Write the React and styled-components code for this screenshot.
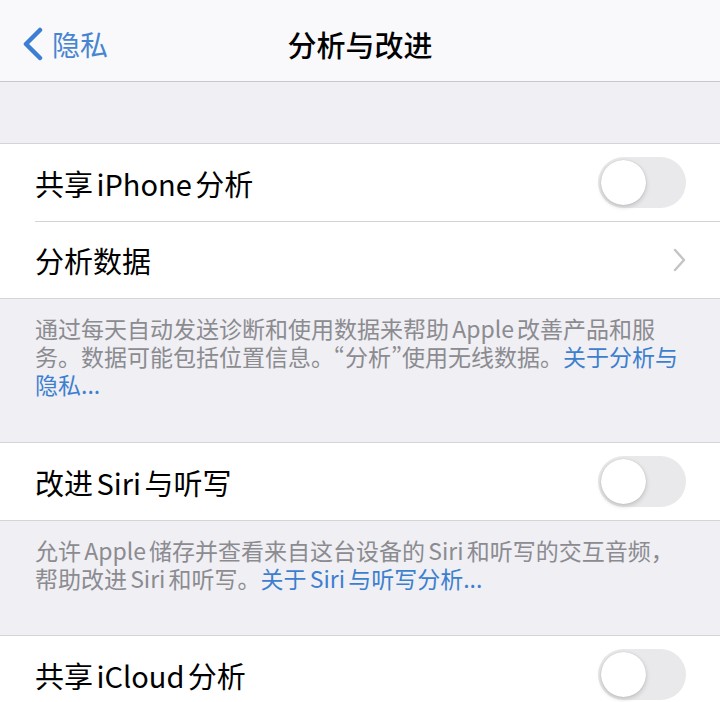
import React from 'react'
import styled, { createGlobalStyle } from 'styled-components'

const GlobalStyle = createGlobalStyle`
  body {
    margin: 0;
    background: #efeff4;
    font-family: 'Noto Sans CJK SC', 'Noto Sans', sans-serif;
    -webkit-font-smoothing: antialiased;
  }
`

const Screen = styled.div`
  width: 720px;
  min-height: 702px;
  overflow: hidden;
  background: #efeff4;
`

const NavBar = styled.div`
  height: 82px;
  box-sizing: border-box;
  padding-top: 6px;
  background: #f9f9fb;
  border-bottom: 1px solid #c8c8cc;
  display: grid;
  grid-template-columns: 1fr auto 1fr;
  align-items: center;
`

const BackButton = styled.div`
  display: flex;
  align-items: center;
  gap: 8px;
  padding-left: 22px;
  color: #4785d2;
  font-size: 28px;
`

const Title = styled.div`
  font-size: 29px;
  font-weight: 500;
  color: #000;
`

const Spacer = styled.div`
  height: 61px;
`

const Group = styled.div`
  background: #fff;
  border-top: 1px solid #d3d3d8;
  border-bottom: 1px solid #d3d3d8;
`

const Row = styled.div`
  height: 77px;
  padding-left: 35px;
  display: flex;
  align-items: center;
  & + & > div {
    border-top: 1px solid #d3d3d8;
  }
`

const RowInner = styled.div`
  flex: 1;
  height: 100%;
  display: flex;
  align-items: center;
  justify-content: space-between;
  padding-right: 34px;
  box-sizing: border-box;
`

const Label = styled.span`
  font-size: 29px;
  word-spacing: -3px;
  color: #000;
`

const Track = styled.div`
  width: 88px;
  height: 51px;
  border-radius: 26px;
  background: ${(p) => (p.on ? '#4cd964' : '#e9e9eb')};
  padding: 3px;
  box-sizing: border-box;
  display: flex;
  justify-content: ${(p) => (p.on ? 'flex-end' : 'flex-start')};
`

const Knob = styled.div`
  width: 45px;
  height: 45px;
  border-radius: 50%;
  background: #fff;
  box-shadow: 0 2px 5px rgba(0, 0, 0, 0.18), 0 0 1px rgba(0, 0, 0, 0.2);
`

const Footer = styled.div`
  padding: 15px 35px ${(p) => p.bottom}px;
  font-size: 23px;
  line-height: 28px;
  word-spacing: -2px;
  color: #8b8b90;
  white-space: nowrap;
`

const Quote = styled.span`
  font-feature-settings: 'pwid';
`

const Link = styled.span`
  color: #3d7fcf;
`

const Toggle = ({ on }) => (
  <Track on={on}>
    <Knob />
  </Track>
)

const BackChevron = () => (
  <svg width='22' height='34' viewBox='0 0 22 34'>
    <polyline
      points='18,3 4,17 18,31'
      fill='none'
      stroke='#3b7ed4'
      strokeWidth='4.5'
      strokeLinecap='round'
      strokeLinejoin='round'
    />
  </svg>
)

const Disclosure = () => (
  <svg width='14' height='24' viewBox='0 0 14 24'>
    <polyline
      points='3,2 12,12 3,22'
      fill='none'
      stroke='#c4c4c8'
      strokeWidth='2.4'
      strokeLinecap='round'
      strokeLinejoin='round'
    />
  </svg>
)

const App = () => {
  return (
    <Screen>
      <GlobalStyle />
      <NavBar>
        <BackButton>
          <BackChevron />
          隐私
        </BackButton>
        <Title>分析与改进</Title>
        <div />
      </NavBar>
      <Spacer />
      <Group>
        <Row>
          <RowInner>
            <Label>共享 iPhone 分析</Label>
            <Toggle />
          </RowInner>
        </Row>
        <Row>
          <RowInner>
            <Label>分析数据</Label>
            <Disclosure />
          </RowInner>
        </Row>
      </Group>
      <Footer bottom={44}>
        通过每天自动发送诊断和使用数据来帮助 Apple 改善产品和服
        <br />
        务。数据可能包括位置信息。<Quote>“</Quote>分析<Quote>”</Quote>
        使用无线数据。<Link>关于分析与</Link>
        <br />
        <Link>隐私...</Link>
      </Footer>
      <Group>
        <Row>
          <RowInner>
            <Label>改进 Siri 与听写</Label>
            <Toggle />
          </RowInner>
        </Row>
      </Group>
      <Footer bottom={43}>
        允许 Apple 储存并查看来自这台设备的 Siri 和听写的交互音频，
        <br />
        帮助改进 Siri 和听写。<Link>关于 Siri 与听写分析...</Link>
      </Footer>
      <Group>
        <Row>
          <RowInner>
            <Label>共享 iCloud 分析</Label>
            <Toggle />
          </RowInner>
        </Row>
      </Group>
    </Screen>
  )
}

export default App
